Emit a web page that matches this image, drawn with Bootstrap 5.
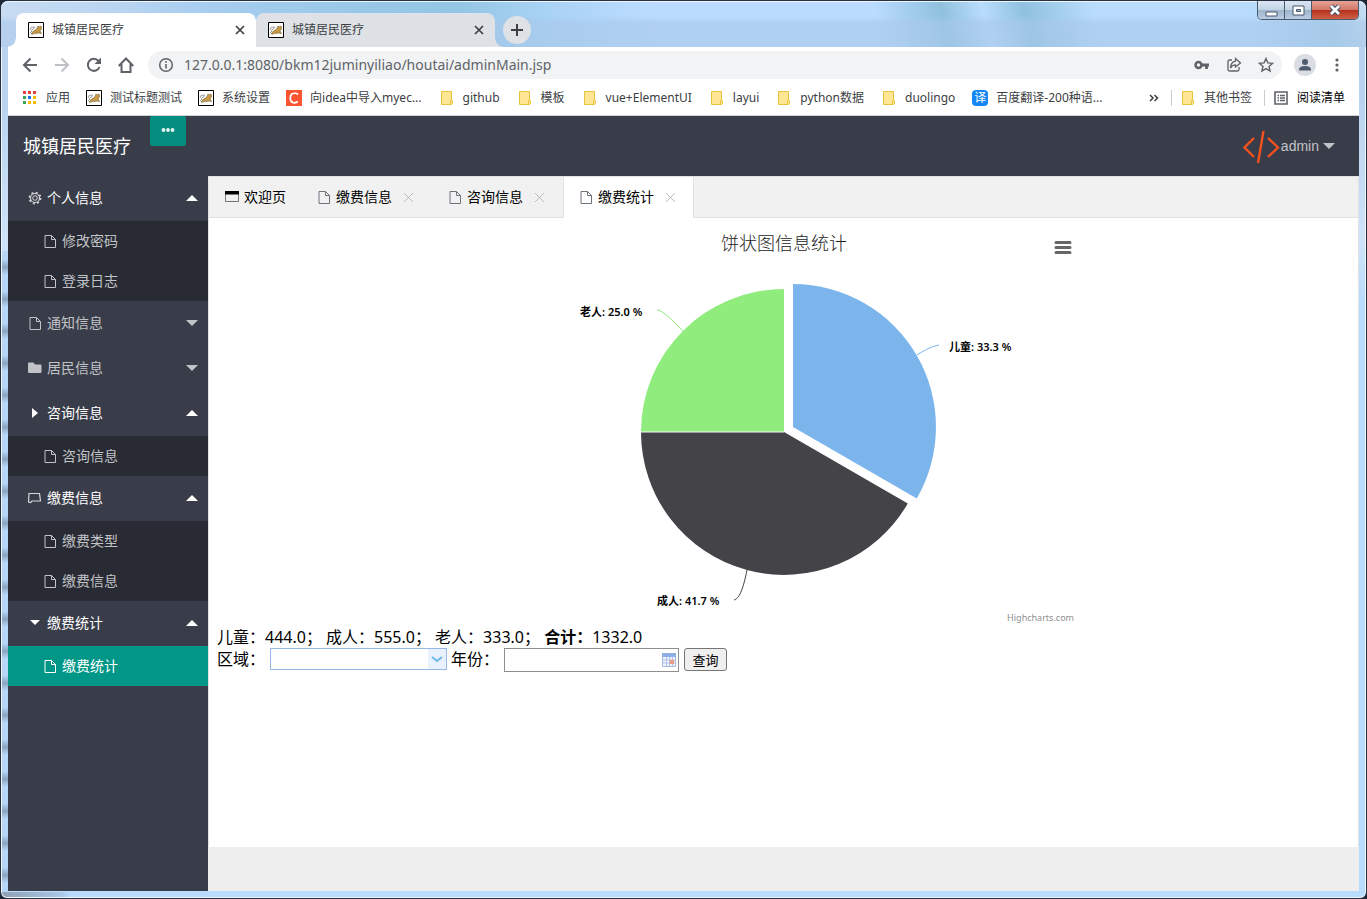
<!DOCTYPE html>
<html lang="zh-CN">
<head>
<meta charset="utf-8">
<meta name="viewport" content="width=device-width, initial-scale=1">
<title>城镇居民医疗</title>
<link href="https://cdn.jsdelivr.net/npm/bootstrap@5.3.0/dist/css/bootstrap.min.css" rel="stylesheet">
<style>
  :root { --ink: #393d49; --ink-dark: #282b33; --teal: #009688; --muted: #c2c3c7; --line: #e2e2e2; }
  body { font-family: "Noto Sans", "Noto Sans CJK SC", sans-serif; font-size: 14px; line-height: 20px; color: #000; background: #1d2733; }
  svg { display: block; flex: none; }
  button { border: 0; padding: 0; background: none; color: inherit; }
  a { color: inherit; text-decoration: none; }

  /* window frame */
  .window-frame { border: 1px solid #26303f; border-radius: 8px 8px 7px 7px; padding: 0 7px 7px; box-shadow: inset 0 0 0 1px #eef6ff;
    background:
      linear-gradient(90deg, #8fa0b4 0, #a9c6e6 60px, transparent 70px) bottom left / 100% 6px no-repeat,
      repeating-linear-gradient(180deg, #b7d7f8 0 8px, #8ca4c0 16px, #b7d7f8 24px 32px) left 250px / 7px 100% no-repeat,
      linear-gradient(180deg, #b9d3ef 0, #b9d3ef 100px, #cfe3f8 240px, #b9dcfd 300px); }
  .title-bar { height: 46px; margin: 0 -7px; padding: 0 7px; border-radius: 7px 7px 0 0; box-shadow: inset 0 1px #eef6ff;
    background: linear-gradient(180deg, transparent 15px, #a9c8ea99 22px 100%),
      linear-gradient(75deg, #c9dcf2 0, #bcd6f2 8%, #a6cdf0 16%, #98c8e8 27%, #93c6e4 34%, #a8d2f5 40%, #bbdcff 48%, #bbdcff 64%, #8fc1dd 69%, #b9dcfc 72%, #8fc1de 75%, #b9dcfc 80%, #b9dcfc 91%, #a4cde8 97%, #cbdff5 100%); }
  .browser-tab { position: relative; width: 239px; height: 34px; margin-top: 12px; padding: 0 8px 0 12px; border-radius: 8px 8px 0 0; font-size: 12px; color: #3c4043; background: #dee1e6; }
  .browser-tab.current { width: 240px; background: #fff; }
  .browser-tab.current::before, .browser-tab:not(.current)::after { content: ""; position: absolute; bottom: 0; width: 8px; height: 8px; }
  .browser-tab.current::before { left: -8px; background: radial-gradient(circle at 0 0, transparent 7px, #fff 8px); }
  .browser-tab:not(.current)::after { right: -8px; background: radial-gradient(circle at 100% 0, transparent 7px, #dee1e6 8px); }
  .new-tab { width: 28px; height: 28px; margin-top: 15px; border-radius: 50%; background: #dee1e6; }
  .window-buttons { height: 19px; border: 1px solid #4c5a6d; border-top: 0; border-radius: 0 0 5px 5px; overflow: hidden; }
  .window-buttons button { width: 27px; background: linear-gradient(#d9e5f2, #c3d4e6 48%, #9db4cc 50%, #b9cde2); border-right: 1px solid #4c5a6d; }
  .window-buttons .shut { width: 46px; border-right: 0; background: linear-gradient(#e5a294, #d3786a 48%, #b5301a 50%, #cf6049); }

  .tool-row { height: 37px; padding: 0 17px 2px 14px; background: #fff; color: #5f6368; }
  .address { height: 28px; margin-left: 14px; border-radius: 14px; background: #f1f3f4; }
  .address input { border: 0; background: none; outline: 0; padding: 0; min-width: 0; font-size: 14px; color: #5f6368; }
  .bookmark-row { height: 32px; padding: 0 14px 4px; font-size: 12px; color: #3c4043; background: #fff; border-bottom: 1px solid #d0d3d6; white-space: nowrap; }
  .bookmark-row a { display: flex; align-items: center; gap: 8px; }
  .bookmark-folders { display: flex; gap: 17px; margin-left: 1px; }
  .logo-tile { width: 16px; height: 16px; font-size: 12px; line-height: 16px; text-align: center; color: #fff; background: #1487f5; }
  .divider { width: 1px; height: 16px; background: #c8ccd0; }

  /* application */
  .app-header { height: 60px; background: var(--ink); color: #fff; }
  .app-title { font-size: 18px; line-height: 60px; width: 142px; padding-left: 15px; }
  .fold-btn { width: 36px; height: 30px; border-radius: 2px; background: #058e80; }
  .user-menu { font-family: "Liberation Sans", sans-serif; color: var(--muted); }
  .side-nav { width: 200px; background: var(--ink); color: var(--muted); }
  .side-nav .group-head { width: 100%; height: 45px; padding: 0 10px 1px 19px; gap: 4px; }
  .side-nav .group-head.open { color: #fff; }
  .side-nav ul { background: var(--ink-dark); }
  .side-nav ul a { display: flex; align-items: center; gap: 4px; height: 40px; padding-left: 34px; }
  .side-nav ul a.current { background: var(--teal); color: #fff; }
  .panel-area { border: 1px solid var(--line); border-bottom: 0; background: #fff; }
  .page-tabs { height: 41px; background: #f1f1f1; border-bottom: 1px solid var(--line); }
  .page-tabs .page-tab { height: 40px; padding: 0 15px; gap: 4px; }
  .page-tabs .shown { height: 41px; padding: 0 14px 1px; background: #fff; border: solid var(--line); border-width: 0 1px; }
  .close-x { width: 18px; height: 18px; margin-left: 3px; }
  .chart-box { width: 600px; max-width: 100%; }
  .chart-menu { top: 10px; right: 9px; width: 24px; height: 24px; }
  .chart-box text { font-family: "Noto Sans", "Noto Sans CJK SC", sans-serif; }
  .figures { font-size: 16px; line-height: 22px; }
  .figures label { line-height: 22px; margin-right: 5px; }
  .area-pick { width: 177px; height: 22px; margin-right: 4px; border: 1px solid #95b8e7; border-radius: 0; appearance: none; outline: 0;
    background: url("data:image/svg+xml,%3Csvg xmlns='http://www.w3.org/2000/svg' width='18' height='20'%3E%3Cpath fill='%23e8f1fd' d='M0 0h18v20H0z'/%3E%3Cpath d='M4 8l5 4 5-4' fill='none' stroke='%2370b8ea' stroke-width='2'/%3E%3C/svg%3E") right center no-repeat #fff; }
  .year-box { width: 175px; height: 24px; border: 1px solid #8f8f8f; }
  .year-box input { border: 0; outline: 0; min-width: 0; padding: 0 4px; }
  .query-btn { width: 43px; height: 23px; margin-left: 5px; border: 1px solid #767676; border-radius: 3px; background: #efefef; font-size: 13px; line-height: 20px; }
  .app-footer { height: 44px; background: #eee; }
</style>
</head>
<body>
<svg width="0" height="0" class="position-absolute">
  <symbol id="doc" viewBox="0 0 16 16"><path d="M3 2.5h6.5l4 4v8H3zM9.500 2.500v4h4" fill="none" stroke="currentColor"/></symbol>
  <symbol id="up" viewBox="0 0 12 6"><path d="M0 6l6-6 6 6z" fill="currentColor"/></symbol>
  <symbol id="down" viewBox="0 0 12 6"><path d="M0 0h12L6 6z" fill="currentColor"/></symbol>
  <symbol id="cross" viewBox="0 0 16 16"><path d="M4 4l8 8M12 4l-8 8" stroke="currentColor" stroke-width="1.700"/></symbol>
  <symbol id="thin" viewBox="0 0 18 18"><path d="M5 5l9 9M14 5l-9 9" stroke="#bbb"/></symbol>
  <symbol id="folder" viewBox="0 0 16 16"><path d="M2.500 1.500h10v9h1v3l-1 1h-10z" fill="#ffe694" stroke="#e8c33c"/><path d="M11.500 10.500v4" stroke="#e8c33c"/></symbol>
  <symbol id="cat" viewBox="0 0 16 16"><path d="M.5.500h15v15H.5z" fill="#fff" stroke="#000"/><path d="M3 12l2.500-3 3-1.500L10 4l1 1 2-1 .7 2.500L12 9l1.500 2.500-3-.5-2.500.6-1-.6L5 12.300z" fill="#c99a45" stroke="#5c4a25" stroke-width=".5"/><path d="M2 8l1-2.500L6.500 5 5.500 7 3 8.500M2 11l2-2" fill="none" stroke="#888" stroke-width=".8"/></symbol>
</svg>

<div class="window-frame min-vh-100 d-flex flex-column">
  <div class="title-bar d-flex">
    <div class="browser-tab current d-flex align-items-center ms-2">
      <svg width="16" height="16"><use href="#cat"/></svg><span class="ms-2 flex-grow-1">城镇居民医疗</span>
      <button aria-label="关闭标签"><svg width="16" height="16"><use href="#cross"/></svg></button>
    </div>
    <div class="browser-tab d-flex align-items-center">
      <svg width="16" height="16"><use href="#cat"/></svg><span class="ms-2 flex-grow-1">城镇居民医疗</span>
      <button aria-label="关闭标签"><svg width="16" height="16"><use href="#cross"/></svg></button>
    </div>
    <button class="new-tab ms-2 d-flex align-items-center justify-content-center" aria-label="新标签页"><svg width="12" height="12"><path d="M6 0v12M0 6h12" stroke="#3c4043" stroke-width="2"/></svg></button>
    <div class="window-buttons d-flex ms-auto">
      <button class="d-flex align-items-center justify-content-center" aria-label="最小化"><svg width="13" height="14"><path d="M1 9h11v4H1z" fill="#fff" stroke="#4b566b"/></svg></button>
      <button class="d-flex align-items-center justify-content-center" aria-label="最大化"><svg width="13" height="11"><path d="M1 1h11v9H1z" fill="#fff" stroke="#4b566b"/><path d="M4.500 4.500h4v2h-4z" fill="#9db4cc" stroke="#4b566b"/></svg></button>
      <button class="shut d-flex align-items-center justify-content-center" aria-label="关闭窗口"><svg width="14" height="12"><path d="M3 2l8 8M11 2l-8 8" stroke="#4b566b" stroke-width="5"/><path d="M3 2l8 8M11 2l-8 8" stroke="#fff" stroke-width="2.500"/></svg></button>
    </div>
  </div>

  <div class="tool-row d-flex align-items-center">
    <button aria-label="后退"><svg width="16" height="16" fill="none" stroke="#5f6368" stroke-width="2"><path d="M15 8H2M8.500 1.500L2 8l6.500 6.500"/></svg></button>
    <button class="ms-3" aria-label="前进"><svg width="16" height="16" fill="none" stroke="#bdc1c6" stroke-width="2"><path d="M1 8h13M7.500 1.500L14 8l-6.500 6.500"/></svg></button>
    <button class="ms-3" aria-label="刷新"><svg width="16" height="16"><path d="M13.500 10A6 6 0 1 1 12.500 4" fill="none" stroke="#5f6368" stroke-width="2"/><path d="M15 .5v6.500H8.500z" fill="#5f6368"/></svg></button>
    <button class="ms-3" aria-label="主页"><svg width="16" height="16" fill="none" stroke="#5f6368" stroke-width="2"><path d="M.7 9L8 1.500 15.300 9M3.500 7v8h9V7"/></svg></button>
    <div class="address d-flex align-items-center flex-grow-1 ps-2 pe-2">
      <svg width="20" height="16" viewBox="-2 0 20 16"><circle cx="8" cy="8" r="6.300" fill="none" stroke="#5f6368" stroke-width="1.500"/><path d="M8 7v4.500M8 4v1.700" stroke="#5f6368" stroke-width="1.600"/></svg>
      <input class="flex-grow-1 ms-2" type="text" aria-label="地址" value="127.0.0.1:8080/bkm12juminyiliao/houtai/adminMain.jsp">
      <button class="ms-3" aria-label="密码"><svg width="16" height="16"><circle cx="4.500" cy="8" r="3" fill="none" stroke="#5f6368" stroke-width="2.500"/><path d="M7 8h8M12.500 8v4" stroke="#5f6368" stroke-width="2.800"/></svg></button>
      <button class="ms-3" aria-label="分享"><svg width="16" height="16" fill="none" stroke="#5f6368" stroke-width="1.300"><path d="M6 3H3.500Q2 3 2 4.500v8Q2 14 3.500 14h8Q13 14 13 12.500V10"/><path d="M9.500 1.500L14.500 6l-5 4V7.800Q6 7.800 4.500 11 4.800 5 9.500 4.200z"/></svg></button>
      <button class="ms-3" aria-label="收藏"><svg width="16" height="16"><path d="M8 1.500l1.900 4.400 4.700.4-3.600 3.100 1.100 4.700L8 11.600l-4.100 2.500L5 9.400 1.400 6.300l4.700-.4z" fill="none" stroke="#5f6368" stroke-width="1.400"/></svg></button>
    </div>
    <button class="ms-2 ps-1" aria-label="用户"><svg width="22" height="22"><circle cx="11" cy="11" r="11" fill="#dadde3"/><circle cx="11" cy="8" r="3" fill="#4f5b6e"/><path d="M5 16.500v-1Q5 12 11 12t6 3.500v1z" fill="#4f5b6e"/></svg></button>
    <button class="ms-3" aria-label="菜单"><svg width="10" height="16" fill="#5f6368"><circle cx="5" cy="3" r="1.600"/><circle cx="5" cy="8" r="1.600"/><circle cx="5" cy="13" r="1.600"/></svg></button>
  </div>

  <nav class="bookmark-row d-flex align-items-center gap-3">
    <a href="#"><svg width="16" height="16"><path d="M1 1h3v3H1zM6 1h3v3H6zM11 1h3v3h-3z" fill="#ea4335"/><path d="M1 6h3v3H1zM1 11h3v3H1z" fill="#34a853"/><path d="M6 6h3v3H6z" fill="#1a73e8"/><path d="M11 6h3v3h-3zM6 11h3v3H6zM11 11h3v3h-3z" fill="#fbbc04"/></svg>应用</a>
    <a href="#"><svg width="16" height="16"><use href="#cat"/></svg>测试标题测试</a>
    <a href="#"><svg width="16" height="16"><use href="#cat"/></svg>系统设置</a>
    <a href="#"><svg width="16" height="16"><path d="M0 0h16v16H0z" fill="#fc5531"/><path d="M12 4.500Q10.500 3 8.500 3.200 4.500 3.500 4.300 8t4 4.800q2 0 3.500-1.300" fill="none" stroke="#fff" stroke-width="1.800"/></svg>向idea中导入myec...</a>
    <div class="bookmark-folders">
      <a href="#"><svg width="16" height="16"><use href="#folder"/></svg>github</a>
      <a href="#"><svg width="16" height="16"><use href="#folder"/></svg>模板</a>
      <a href="#"><svg width="16" height="16"><use href="#folder"/></svg>vue+ElementUI</a>
      <a href="#"><svg width="16" height="16"><use href="#folder"/></svg>layui</a>
      <a href="#"><svg width="16" height="16"><use href="#folder"/></svg>python数据</a>
      <a href="#"><svg width="16" height="16"><use href="#folder"/></svg>duolingo</a>
      <a href="#"><span class="logo-tile rounded-1">译</span>百度翻译-200种语...</a>
    </div>
    <div class="d-flex align-items-center gap-2 ms-auto">
      <button class="me-1" aria-label="更多书签"><svg width="10" height="8" fill="none" stroke="#3c4043" stroke-width="1.500"><path d="M1 1l3 3-3 3M5.500 1l3 3-3 3"/></svg></button>
      <span class="divider"></span>
      <a href="#"><svg width="16" height="16"><use href="#folder"/></svg>其他书签</a>
      <span class="divider ms-1"></span>
      <a href="#" class="text-black"><svg width="16" height="16"><path d="M2 2h12v12H2z" fill="none" stroke="#5f6368" stroke-width="1.600"/><path d="M4.500 5.500h1.500M7 5.500h5M4.500 8h1.500M7 8h5M4.500 10.500h1.500M7 10.500h5" stroke="#5f6368" stroke-width="1.400"/></svg>阅读清单</a>
    </div>
  </nav>

  <div class="d-flex flex-column flex-grow-1">
    <header class="app-header d-flex">
      <div class="app-title">城镇居民医疗</div>
      <button class="fold-btn d-flex align-items-center justify-content-center" aria-label="折叠菜单"><svg width="14" height="6" fill="#e8f4f2"><circle cx="2.500" cy="2" r="1.900"/><circle cx="7" cy="2" r="1.900"/><circle cx="11.500" cy="2" r="1.900"/></svg></button>
      <a href="#" class="user-menu d-flex align-items-center ms-auto pe-4">
        <svg width="38" height="34" fill="none" stroke="#f4511e" stroke-width="2.400"><path d="M11 9L1.500 18.500 11 28M25 9l10 9.500L25 28M20.500 2L15 34"/></svg>admin
        <svg class="ms-1" width="12" height="6"><use href="#down"/></svg>
      </a>
    </header>

    <div class="d-flex flex-grow-1">
      <nav class="side-nav flex-shrink-0">
        <button class="group-head open d-flex align-items-center"><svg width="16" height="16" fill="none" stroke="#d5d6da"><circle cx="8" cy="8" r="2.300"/><circle cx="8" cy="8" r="4.500" stroke-width="1.200"/><circle cx="8" cy="8" r="5.600" stroke-width="1.600" stroke-dasharray="2 2.400"/></svg>个人信息<svg class="ms-auto" width="12" height="6"><use href="#up"/></svg></button>
        <ul class="list-unstyled m-0">
          <li><a href="#"><svg width="16" height="16"><use href="#doc"/></svg>修改密码</a></li>
          <li><a href="#"><svg width="16" height="16"><use href="#doc"/></svg>登录日志</a></li>
        </ul>
        <button class="group-head d-flex align-items-center"><svg width="16" height="16"><use href="#doc"/></svg>通知信息<svg class="ms-auto" width="12" height="6"><use href="#down"/></svg></button>
        <button class="group-head d-flex align-items-center"><svg width="16" height="16"><path d="M1 3.500Q1 2.500 2 2.500h4.500l1.500 2h5.500q1 0 1 1V12q0 1-1 1H2q-1 0-1-1z" fill="currentColor"/></svg>居民信息<svg class="ms-auto" width="12" height="6"><use href="#down"/></svg></button>
        <button class="group-head open d-flex align-items-center"><svg width="16" height="16"><path d="M5 3l6 5-6 5z" fill="currentColor"/></svg>咨询信息<svg class="ms-auto" width="12" height="6"><use href="#up"/></svg></button>
        <ul class="list-unstyled m-0">
          <li><a href="#"><svg width="16" height="16"><use href="#doc"/></svg>咨询信息</a></li>
        </ul>
        <button class="group-head open d-flex align-items-center"><svg width="16" height="16" fill="none" stroke="#d5d6da" stroke-width="1.200"><path d="M2 3.500h10.500L13.500 11H5l-1.500 1.500L1.500 12z"/></svg>缴费信息<svg class="ms-auto" width="12" height="6"><use href="#up"/></svg></button>
        <ul class="list-unstyled m-0">
          <li><a href="#"><svg width="16" height="16"><use href="#doc"/></svg>缴费类型</a></li>
          <li><a href="#"><svg width="16" height="16"><use href="#doc"/></svg>缴费信息</a></li>
        </ul>
        <button class="group-head open d-flex align-items-center"><svg width="16" height="16"><path d="M3 5h10l-5 5z" fill="currentColor"/></svg>缴费统计<svg class="ms-auto" width="12" height="6"><use href="#up"/></svg></button>
        <ul class="list-unstyled m-0">
          <li><a href="#" class="current"><svg width="16" height="16"><use href="#doc"/></svg>缴费统计</a></li>
        </ul>
      </nav>

      <div class="d-flex flex-column flex-grow-1">
        <main class="panel-area flex-grow-1">
          <div class="page-tabs d-flex">
            <a href="#" class="page-tab d-flex align-items-center"><svg width="16" height="16"><path d="M1.500 2.500h13v10h-13z" fill="none" stroke="#777"/><path d="M1 2h14v3.500H1z"/></svg>欢迎页</a>
            <div class="page-tab d-flex align-items-center"><svg width="16" height="16" class="text-secondary"><use href="#doc"/></svg><a href="#">缴费信息</a><button class="close-x" aria-label="关闭"><svg width="18" height="18"><use href="#thin"/></svg></button></div>
            <div class="page-tab d-flex align-items-center"><svg width="16" height="16" class="text-secondary"><use href="#doc"/></svg><a href="#">咨询信息</a><button class="close-x" aria-label="关闭"><svg width="18" height="18"><use href="#thin"/></svg></button></div>
            <div class="page-tab shown d-flex align-items-center"><svg width="16" height="16" class="text-secondary"><use href="#doc"/></svg><a href="#">缴费统计</a><button class="close-x" aria-label="关闭"><svg width="18" height="18"><use href="#thin"/></svg></button></div>
          </div>
          <div class="p-2">
            <div class="chart-box position-relative mx-auto">
              <svg class="w-100" viewBox="0 0 600 400" role="img" aria-label="饼状图信息统计">
                <text x="300" y="24" text-anchor="middle" font-size="18" font-weight="300" fill="#222">饼状图信息统计</text>
                <path d="M309 201V58A143 143 0 0 1 432.800 272.500z" fill="#7cb5ec"/>
                <path d="M300 206L423.800 277.500A143 143 0 0 1 157 206z" fill="#434348"/>
                <path d="M300 206H157A143 143 0 0 1 300 63z" fill="#90ed7d"/>
                <path d="M157 206H300" stroke="#fff"/>
                <g fill="none">
                  <path d="M455 119C450 120 444 122 432.800 129" stroke="#7cb5ec"/>
                  <path d="M250 374C255 373 259 364 263 344" stroke="#434348"/>
                  <path d="M173 84C178 84 186 92 199 105" stroke="#90ed7d"/>
                </g>
                <g font-size="11" font-weight="600" fill="#000">
                  <text x="465" y="125">儿童: 33.3 %</text>
                  <text x="173" y="379">成人: 41.7 %</text>
                  <text x="96" y="90">老人: 25.0 %</text>
                </g>
                <text x="590" y="395" text-anchor="end" font-size="9" fill="#909090">Highcharts.com</text>
              </svg>
              <button class="chart-menu position-absolute" aria-label="图表菜单"><svg width="24" height="24"><path d="M5 6.500h14M5 11.500h14M5 16.500h14" stroke="#666" stroke-width="3" stroke-linecap="round"/></svg></button>
            </div>
            <div class="figures">
              <div>儿童：444.0； 成人：555.0； 老人：333.0； <b>合计：</b>1332.0</div>
              <form class="d-flex align-items-start">
                <label for="area">区域：</label>
                <select id="area" class="area-pick"><option></option></select>
                <label for="year">年份：</label>
                <div class="year-box d-flex align-items-center">
                  <input id="year" type="text" class="flex-grow-1">
                  <svg width="16" height="14"><path d="M.5.500h13v13H.5z" fill="#eef2fb" stroke="#a9b9dc"/><path d="M0 0h14v4H0z" fill="#8fb0e6"/><path d="M1 7h12M1 10h12M4.500 4v9M7.500 4v9M10.500 4v9" stroke="#b4c3e4"/><path d="M8 7h4v4H8z" fill="#ee9b85"/></svg>
                </div>
                <button type="button" class="query-btn">查询</button>
              </form>
            </div>
          </div>
        </main>
        <footer class="app-footer"></footer>
      </div>
    </div>
  </div>
</div>
<script src="https://cdn.jsdelivr.net/npm/bootstrap@5.3.0/dist/js/bootstrap.bundle.min.js"></script>
</body>
</html>
